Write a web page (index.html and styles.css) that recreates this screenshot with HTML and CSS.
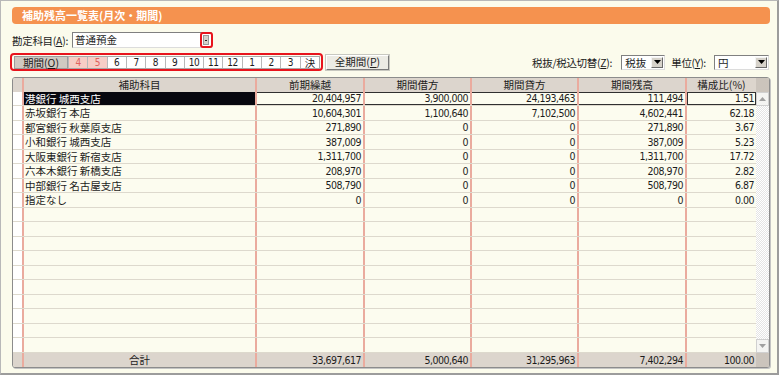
FILE: index.html
```html
<!DOCTYPE html>
<html lang="ja">
<head>
    <meta charset="UTF-8">
    <title>補助残高一覧表</title>
    <link rel="stylesheet" href="styles.css">
</head>
<body>
    <div class="window">
        <div class="title">補助残高一覧表(月次・期間)</div>

        <div class="account-row">
            <span class="label account-label">勘定科目(<u>A</u>):</span>
            <div class="combo">
                <span class="combo-text">普通預金</span>
                <span class="mini-btn"></span>
                <span class="highlight"></span>
            </div>
        </div>

        <div class="toolbar">
            <div class="period-group">
                <span class="period-label">期間(<u>O</u>)</span>
                <div class="months">
                    <span class="month active">4</span>
                    <span class="month active">5</span>
                    <span class="month">6</span>
                    <span class="month">7</span>
                    <span class="month">8</span>
                    <span class="month">9</span>
                    <span class="month">10</span>
                    <span class="month">11</span>
                    <span class="month">12</span>
                    <span class="month">1</span>
                    <span class="month">2</span>
                    <span class="month">3</span>
                    <span class="month">決</span>
                </div>
            </div>
            <button class="btn">全期間(<u>P</u>)</button>
            <div class="spacer"></div>
            <span class="label tax-label">税抜/税込切替(<u>Z</u>):</span>
            <div class="select tax">
                <span class="select-text">税抜</span>
                <span class="drop"><svg width="7" height="4" viewBox="0 0 7 4"><path d="M0 0h7L3.5 4z"/></svg></span>
            </div>
            <span class="label unit-label">単位(<u>Y</u>):</span>
            <div class="select unit">
                <span class="select-text">円</span>
                <span class="drop"><svg width="7" height="4" viewBox="0 0 7 4"><path d="M0 0h7L3.5 4z"/></svg></span>
            </div>
        </div>

        <div class="table">
            <div class="head">
                <span class="rh"></span>
                <span class="c">補助科目</span>
                <span class="c">前期繰越</span>
                <span class="c">期間借方</span>
                <span class="c">期間貸方</span>
                <span class="c">期間残高</span>
                <span class="c last">構成比(%)</span>
                <span class="corner"></span>
            </div>

            <div class="body">
                <div class="rows">
                    <div class="row selected">
                        <span class="rh"></span><span class="c name">港銀行 城西支店</span>
                        <span class="c num">20,404,957</span><span class="c num">3,900,000</span><span class="c num">24,193,463</span><span class="c num">111,494</span><span class="c num last focus">1.51</span>
                    </div>
                    <div class="row">
                        <span class="rh"></span><span class="c name">赤坂銀行 本店</span>
                        <span class="c num">10,604,301</span><span class="c num">1,100,640</span><span class="c num">7,102,500</span><span class="c num">4,602,441</span><span class="c num last">62.18</span>
                    </div>
                    <div class="row">
                        <span class="rh"></span><span class="c name">都宮銀行 秋葉原支店</span>
                        <span class="c num">271,890</span><span class="c num">0</span><span class="c num">0</span><span class="c num">271,890</span><span class="c num last">3.67</span>
                    </div>
                    <div class="row">
                        <span class="rh"></span><span class="c name">小和銀行 城西支店</span>
                        <span class="c num">387,009</span><span class="c num">0</span><span class="c num">0</span><span class="c num">387,009</span><span class="c num last">5.23</span>
                    </div>
                    <div class="row">
                        <span class="rh"></span><span class="c name">大阪東銀行 新宿支店</span>
                        <span class="c num">1,311,700</span><span class="c num">0</span><span class="c num">0</span><span class="c num">1,311,700</span><span class="c num last">17.72</span>
                    </div>
                    <div class="row">
                        <span class="rh"></span><span class="c name">六本木銀行 新橋支店</span>
                        <span class="c num">208,970</span><span class="c num">0</span><span class="c num">0</span><span class="c num">208,970</span><span class="c num last">2.82</span>
                    </div>
                    <div class="row">
                        <span class="rh"></span><span class="c name">中部銀行 名古屋支店</span>
                        <span class="c num">508,790</span><span class="c num">0</span><span class="c num">0</span><span class="c num">508,790</span><span class="c num last">6.87</span>
                    </div>
                    <div class="row">
                        <span class="rh"></span><span class="c name">指定なし</span>
                        <span class="c num">0</span><span class="c num">0</span><span class="c num">0</span><span class="c num">0</span><span class="c num last">0.00</span>
                    </div>
                    <div class="row"><span class="rh"></span><span class="c"></span><span class="c"></span><span class="c"></span><span class="c"></span><span class="c"></span><span class="c last"></span></div>
                    <div class="row"><span class="rh"></span><span class="c"></span><span class="c"></span><span class="c"></span><span class="c"></span><span class="c"></span><span class="c last"></span></div>
                    <div class="row"><span class="rh"></span><span class="c"></span><span class="c"></span><span class="c"></span><span class="c"></span><span class="c"></span><span class="c last"></span></div>
                    <div class="row"><span class="rh"></span><span class="c"></span><span class="c"></span><span class="c"></span><span class="c"></span><span class="c"></span><span class="c last"></span></div>
                    <div class="row"><span class="rh"></span><span class="c"></span><span class="c"></span><span class="c"></span><span class="c"></span><span class="c"></span><span class="c last"></span></div>
                    <div class="row"><span class="rh"></span><span class="c"></span><span class="c"></span><span class="c"></span><span class="c"></span><span class="c"></span><span class="c last"></span></div>
                    <div class="row"><span class="rh"></span><span class="c"></span><span class="c"></span><span class="c"></span><span class="c"></span><span class="c"></span><span class="c last"></span></div>
                    <div class="row"><span class="rh"></span><span class="c"></span><span class="c"></span><span class="c"></span><span class="c"></span><span class="c"></span><span class="c last"></span></div>
                    <div class="row"><span class="rh"></span><span class="c"></span><span class="c"></span><span class="c"></span><span class="c"></span><span class="c"></span><span class="c last"></span></div>
                    <div class="row"><span class="rh"></span><span class="c"></span><span class="c"></span><span class="c"></span><span class="c"></span><span class="c"></span><span class="c last"></span></div>
                </div>

                <div class="scrollbar">
                    <span class="arrow up"><svg width="7" height="4" viewBox="0 0 7 4"><path d="M0 4h7L3.5 0z"/></svg></span>
                    <span class="track"></span>
                    <span class="arrow down"><svg width="7" height="4" viewBox="0 0 7 4"><path d="M0 0h7L3.5 4z"/></svg></span>
                </div>
            </div>

            <div class="foot">
                <span class="rh"></span>
                <span class="c">合計</span>
                <span class="c num">33,697,617</span>
                <span class="c num">5,000,640</span>
                <span class="c num">31,295,963</span>
                <span class="c num">7,402,294</span>
                <span class="c num last">100.00</span>
                <span class="corner"></span>
            </div>
        </div>
    </div>
</body>
</html>
```

FILE: styles.css
```css
* {
    box-sizing: border-box;
}

body {
    margin: 0;
    background: #fff;
    font-family: "Noto Sans CJK JP", sans-serif;
    font-size: 10.5px;
    color: #1c1c1c;
}

u {
    text-decoration: underline;
    text-underline-offset: 1px;
}

.label {
    white-space: nowrap;
}

.window {
    width: 779px;
    height: 375px;
    background: #fbfbec;
    border-top: 1px solid #b8b8b8;
    border-left: 1px solid #b8b8b8;
    border-right: 2px solid #9c9c9c;
    border-bottom: 2px solid #9c9c9c;
    padding: 6px 7px 0 11px;
}

/* title bar */
.title {
    height: 17px;
    line-height: 17px;
    background: #f5924f;
    border-radius: 4px;
    color: #fff;
    font-size: 11px;
    font-weight: bold;
    padding-left: 10px;
}

/* account row */
.account-row {
    display: flex;
    align-items: center;
    height: 16px;
    margin-top: 8px;
}

.account-label {
    width: 60px;
    flex-shrink: 0;
    letter-spacing: -0.3px;
}

.combo {
    position: relative;
    width: 140px;
    height: 16px;
    background: #fff;
    border: 1px solid;
    border-color: #808080 #dcdcdc #dcdcdc #808080;
    line-height: 14px;
    padding-left: 2px;
}

.mini-btn {
    position: absolute;
    right: 2px;
    top: 2px;
    width: 6px;
    height: 10px;
    background: #d6d2ca;
    border: 1px solid #9a9a9a;
}

.mini-btn::after {
    content: "";
    position: absolute;
    left: 1px;
    top: 4px;
    width: 2px;
    height: 1px;
    background: #222;
}

.highlight {
    position: absolute;
    left: 127px;
    top: -1px;
    width: 13px;
    height: 16px;
    border: 2px solid #e8141c;
    border-radius: 3px;
}

/* period selector + options */
.toolbar {
    display: flex;
    align-items: center;
    height: 18px;
    margin-top: 5px;
    padding-right: 1px;
}

.period-group {
    display: flex;
    width: 313px;
    height: 18px;
    margin-left: -2px;
    border: 2px solid #e8141c;
    border-radius: 4px;
    padding: 1px 1px 0 2px;
}

.period-label {
    width: 54px;
    height: 13px;
    line-height: 11px;
    text-align: center;
    background: #d0c9c1;
    border: 1px solid #9c9c9c;
}

.months {
    flex: 1;
    display: grid;
    grid-template-columns: repeat(13, 1fr);
    height: 13px;
    border: 1px solid #a8a8a8;
    border-left: none;
    background: #fff;
}

.month {
    text-align: center;
    line-height: 11px;
    border-left: 1px solid #b8b8b8;
    font-family: "DejaVu Sans Condensed", sans-serif;
    font-size: 10px;
    letter-spacing: -0.4px;
}

.month:last-child {
    font-family: "Noto Sans CJK JP", sans-serif;
    font-size: 10.5px;
}

.month.active {
    background: #f7cdc6;
    color: #e0625c;
}

.btn {
    width: 63px;
    height: 15px;
    margin-left: 3px;
    padding: 0;
    font: inherit;
    line-height: 12px;
    color: #1c1c1c;
    background: #ecebe4;
    border: 1px solid;
    border-color: #fff #7a7a7a #7a7a7a #fff;
    box-shadow: 0 0 0 1px #c8c8c0;
}

.spacer {
    flex: 1;
}

.tax-label {
    margin-right: 9px;
    letter-spacing: -0.3px;
}

.unit-label {
    margin-left: 6px;
    margin-right: 8px;
    letter-spacing: -0.3px;
}

.select {
    display: flex;
    height: 15px;
    background: #fff;
    border: 1px solid;
    border-color: #808080 #dcdcdc #dcdcdc #808080;
    padding: 1px;
}

.select.tax {
    width: 44px;
}

.select.unit {
    width: 55px;
}

.select-text {
    flex: 1;
    line-height: 11px;
    padding-left: 2px;
}

.drop {
    width: 12px;
    display: flex;
    align-items: center;
    justify-content: center;
    background: #d6d2ca;
    border: 1px solid;
    border-color: #f4f4f4 #6a6a6a #6a6a6a #f4f4f4;
}

/* grid */
.table {
    width: 758px;
    margin-top: 6px;
    border: 1px solid #8c8c8c;
    border-radius: 3px;
    box-shadow: 1px 1px 0 #c4c4c4;
    overflow: hidden;
    background: #fcfcef;
}

.head,
.foot,
.row {
    display: grid;
    grid-template-columns: 11px 233px 108px 107px 107px 108px 69px;
}

.head,
.foot {
    grid-template-columns: 11px 233px 108px 107px 107px 108px 69px 13px;
    height: 14px;
    line-height: 14px;
    background: #dcd5cd;
}

.head .c {
    text-align: center;
}

.foot .c:nth-child(2) {
    text-align: center;
}

.corner {
    background: #cbc4bc;
}

.c,
.rh {
    border-right: 2px solid #eaab9e;
    white-space: nowrap;
}

.c.last {
    border-right: none;
}

.body {
    display: flex;
}

.rows {
    width: 743px;
}

.row {
    height: 14px;
    line-height: 13px;
    border-bottom: 1px solid #ddd9cd;
}

.row:nth-child(even) {
    height: 15px;
    line-height: 14px;
}

.row .rh {
    background: #fff;
}

.name {
    padding-left: 1px;
}

.num {
    text-align: right;
    padding-right: 2px;
    font-family: "DejaVu Sans Condensed", sans-serif;
    font-size: 10.5px;
    letter-spacing: -0.5px;
}

.row.selected {
    box-shadow: inset 0 1px #303030, inset 0 -1px #303030;
}

.row.selected .name {
    background: #07070f;
    color: #fff;
}

.row.selected .focus {
    box-shadow: inset 0 0 0 1px #303030;
}

/* scrollbar */
.scrollbar {
    width: 13px;
    display: flex;
    flex-direction: column;
}

.arrow {
    height: 14px;
    display: flex;
    align-items: center;
    justify-content: center;
    background: #f4f4f2;
    border: 1px solid #d0d0d0;
    fill: #a0a0a0;
}

.track {
    flex: 1;
    background-color: #fff;
    background-image: conic-gradient(#e4e4e4 25%, #fff 0 50%, #e4e4e4 0 75%, #fff 0);
    background-size: 2px 2px;
}
```
